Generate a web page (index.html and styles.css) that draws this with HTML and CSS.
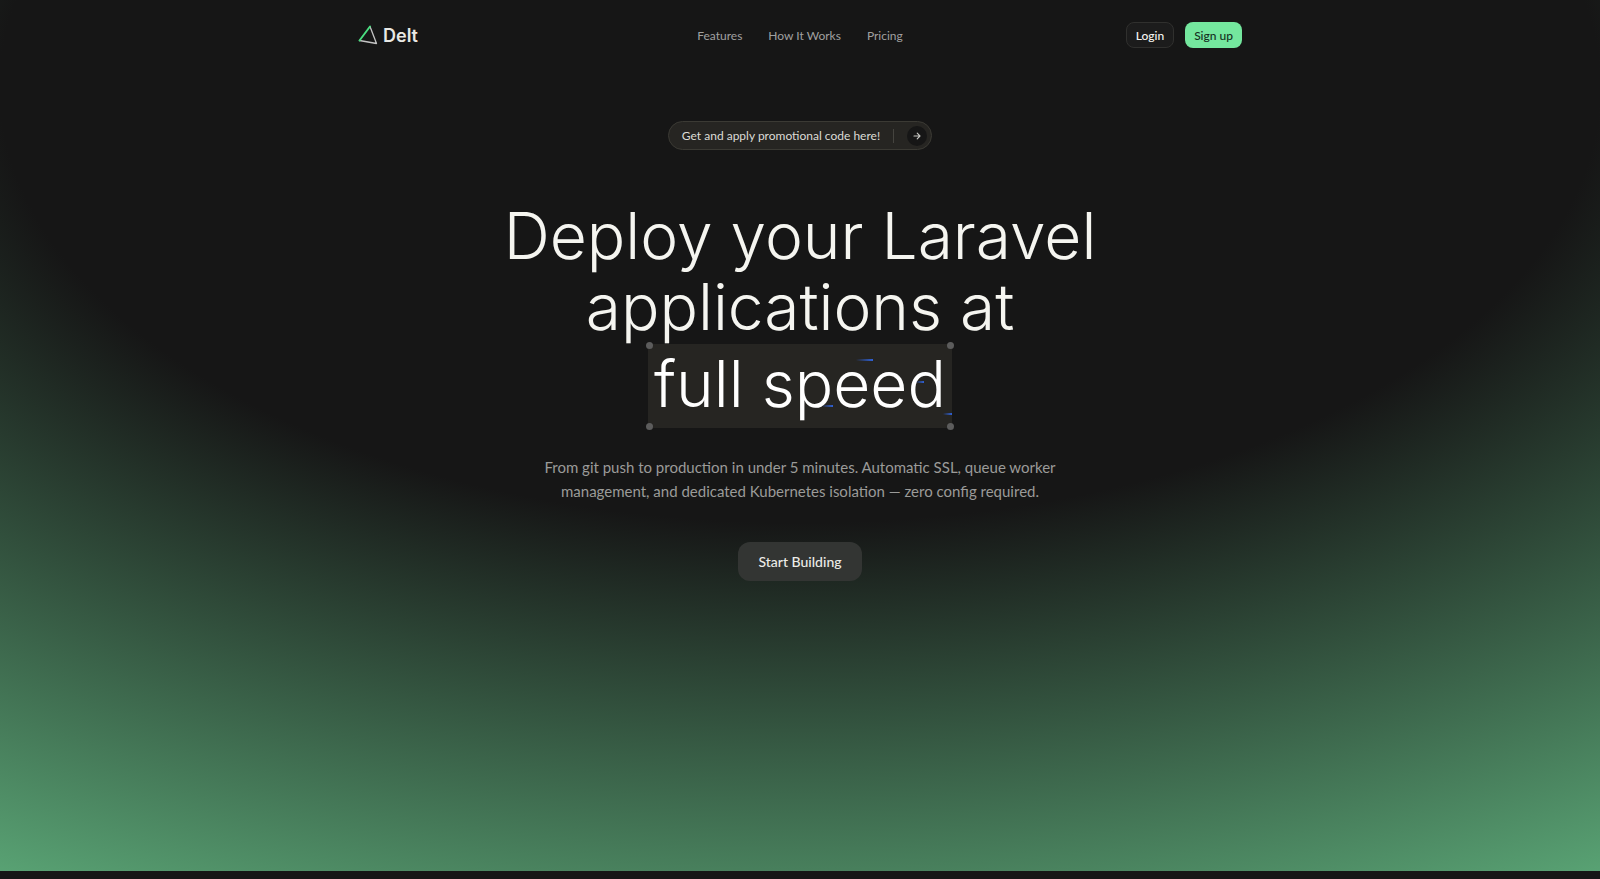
FILE: index.html
```
<!DOCTYPE html>
<html lang="en">

<head>
    <meta charset="UTF-8">
    <meta name="viewport" content="width=device-width, initial-scale=1.0">
    <title>Delt</title>
    <link rel="stylesheet" href="styles.css">
</head>

<body>

    <div class="hero">
        <header class="navbar">
            <a class="logo" href="#">
                <svg class="logo-icon" viewBox="0 0 20 20" fill="none" stroke-width="1.3" stroke-linejoin="round" stroke-linecap="round" aria-hidden="true">
                    <path d="M12 1.5L18.5 18.5L1.5 15.5" stroke="#c4c4c4" />
                    <path d="M1.5 15.5L12 1.5" stroke="#4ade80" stroke-width="1.9" />
                </svg>
                <span>Delt</span>
            </a>
            <nav class="nav-links">
                <a href="#features">Features</a>
                <a href="#how-it-works">How It Works</a>
                <a href="#pricing">Pricing</a>
            </nav>
            <div class="nav-actions">
                <button class="btn btn-login" type="button">Login</button>
                <button class="btn btn-signup" type="button">Sign up</button>
            </div>
        </header>

        <main class="content">
            <a class="promo" href="#promo">
                <span>Get and apply promotional code here!</span>
                <span class="promo-divider"></span>
                <span class="promo-arrow">
                    <svg viewBox="0 0 10 10" fill="none" stroke="currentColor" stroke-width="1.1" stroke-linecap="round" stroke-linejoin="round" aria-hidden="true">
                        <path d="M2 5H8M5.2 2.2L8 5L5.2 7.8" />
                    </svg>
                </span>
            </a>

            <h1 class="title">
                <span>Deploy your Laravel</span>
                <span>applications at</span>
                <span class="highlight">
                    full speed
                    <i class="dot dot-tl"></i>
                    <i class="dot dot-tr"></i>
                    <i class="dot dot-bl"></i>
                    <i class="dot dot-br"></i>
                    <i class="beam beam-1"></i>
                    <i class="beam beam-2"></i>
                    <i class="beam beam-3"></i>
                    <i class="beam beam-4"></i>
                </span>
            </h1>

            <p class="description">From git push to production in under 5 minutes. Automatic SSL, queue worker management, and dedicated Kubernetes isolation — zero config required.</p>

            <button class="btn-start" type="button">Start Building</button>
        </main>
    </div>

</body>

</html>
```

FILE: styles.css
```
* {
    margin: 0;
    padding: 0;
    box-sizing: border-box;
}

body {
    min-height: 100vh;
    background-color: #161616;
    font-family: Lato, "Liberation Sans", sans-serif;
    color: #f5f5f0;
}

a {
    color: inherit;
    text-decoration: none;
}

button {
    font-family: inherit;
    border: none;
    cursor: pointer;
}

.hero {
    min-height: calc(100vh - 8px);
    background: radial-gradient(125% 125% at 50% 10%, #161616 40%, #74dc9a 100%);
}

/* navbar */

.navbar {
    display: grid;
    grid-template-columns: 1fr auto 1fr;
    align-items: center;
    max-width: 884px;
    height: 70px;
    margin: 0 auto;
}

.logo {
    display: flex;
    align-items: center;
    gap: 5px;
    font-family: Inter, sans-serif;
    font-size: 18px;
    font-weight: 600;
    color: #e8e8e4;
}

.logo-icon {
    width: 20px;
    height: 20px;
}

.nav-links {
    display: flex;
    gap: 26px;
    font-size: 12px;
    color: #a0a0a0;
}

.nav-actions {
    display: flex;
    align-items: center;
    justify-content: flex-end;
    gap: 11px;
}

.btn {
    height: 26px;
    padding: 0 9px;
    border-radius: 8px;
    font-size: 12px;
    font-weight: 500;
}

.btn-login {
    background-color: #1c1c1c;
    border: 1px solid #30302e;
    color: #f5f5f0;
}

.btn-signup {
    background-color: #74e79e;
    color: #14301f;
}

/* hero content */

.content {
    display: flex;
    flex-direction: column;
    align-items: center;
    padding: 51px 16px 64px;
}

.promo {
    display: flex;
    align-items: center;
    height: 29px;
    padding: 0 4px 0 13px;
    border: 1px solid #3b3a34;
    border-radius: 15px;
    background-color: #262522;
    font-size: 12px;
    color: #dcdcd6;
}

.promo-divider {
    width: 1px;
    height: 14px;
    margin: 0 13px;
    background-color: #45443f;
}

.promo-arrow {
    display: flex;
    align-items: center;
    justify-content: center;
    width: 20px;
    height: 20px;
    border-radius: 50%;
    background-color: #161616;
    color: #c8c8c4;
}

.promo-arrow svg {
    width: 10px;
    height: 10px;
}

.title {
    display: flex;
    flex-direction: column;
    align-items: center;
    margin-top: 50px;
    font-family: Inter, sans-serif;
    font-size: 64px;
    font-weight: 300;
    line-height: 71px;
    text-align: center;
}

.highlight {
    position: relative;
    margin-top: 2px;
    padding: 0 6px 4px;
    background-color: #262522;
    color: #fff;
    line-height: 80px;
}

.dot {
    position: absolute;
    width: 7px;
    height: 7px;
    border-radius: 50%;
    background-color: #5c5c5c;
}

.dot-tl {
    top: -2px;
    left: -2px;
}

.dot-tr {
    top: -2px;
    right: -2px;
}

.dot-bl {
    bottom: -2px;
    left: -2px;
}

.dot-br {
    bottom: -2px;
    right: -2px;
}

.beam {
    position: absolute;
    height: 2px;
    background: linear-gradient(to right, transparent, #2f62d9);
}

.beam-1 {
    top: 15px;
    right: 79px;
    width: 17px;
}

.beam-2 {
    top: 37px;
    right: 28px;
    width: 8px;
}

.beam-3 {
    top: 61px;
    right: 119px;
    width: 11px;
}

.beam-4 {
    top: 69px;
    right: 0;
    width: 9px;
}

.description {
    max-width: 540px;
    margin-top: 27px;
    font-size: 15px;
    line-height: 24px;
    text-align: center;
    color: #9b9b99;
}

.btn-start {
    height: 39px;
    margin-top: 39px;
    padding: 0 20px;
    border-radius: 12px;
    background-color: #333533;
    font-size: 14px;
    font-weight: 500;
    color: #ecece8;
}
```
